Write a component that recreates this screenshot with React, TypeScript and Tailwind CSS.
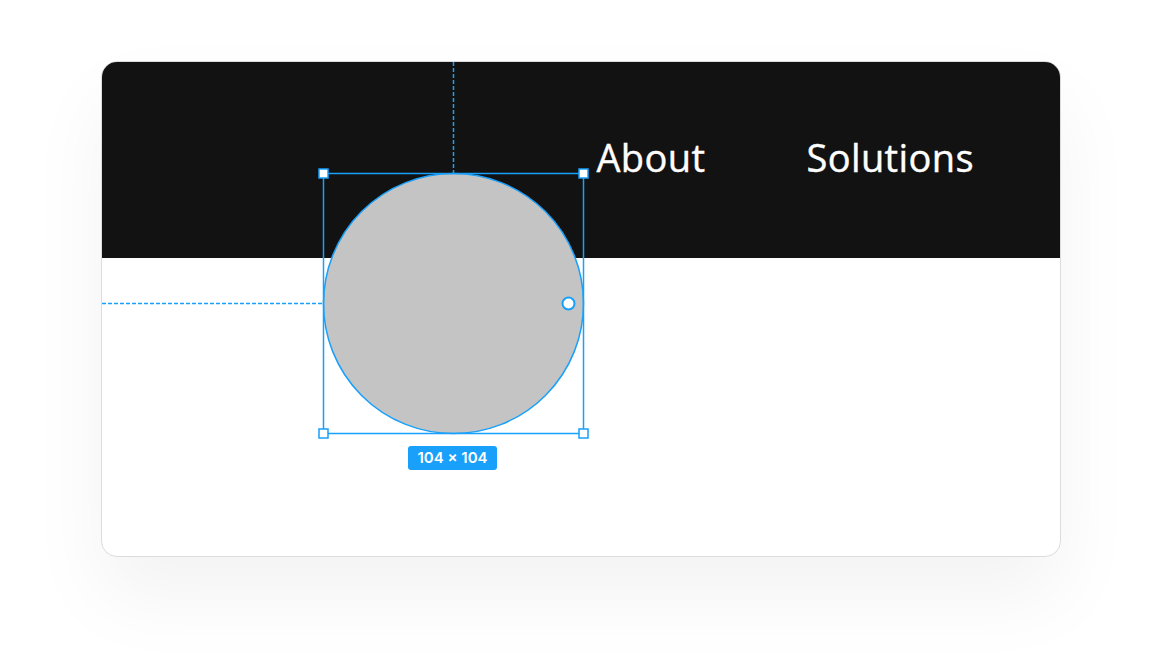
import React from "react";

export default function App() {
  const blue = "#18a0fb";
  return (
    <div className="w-[1162px] h-[658px] bg-white overflow-hidden">
      <div className="pt-[61px]">
        <div className="relative mx-auto w-[960px] h-[496px] rounded-[16px] border border-[#dcdcdc] bg-white shadow-[0_40px_80px_rgba(0,0,0,0.05)] overflow-hidden">
          <header className="h-[196px] bg-[#121212] flex justify-end items-start pt-[69px] pr-[86px] gap-[101px]">
            <span className="text-white text-[38px] leading-[52px] font-medium tracking-[0.4px]" style={{ fontFamily: "'Open Sans', sans-serif", WebkitTextStroke: "0.4px white" }}>About</span>
            <span className="text-white text-[38px] leading-[52px] font-medium tracking-[0.4px]" style={{ fontFamily: "'Open Sans', sans-serif", WebkitTextStroke: "0.4px white" }}>Solutions</span>
          </header>

          {/* selection overlay */}
          <svg className="absolute left-0 top-0" width="960" height="496" viewBox="0 0 960 496">
            {/* dashed guides */}
            <line x1="351.5" y1="0" x2="351.5" y2="111" stroke={blue} strokeWidth="1.5" strokeDasharray="4 2" />
            <line x1="0" y1="241.5" x2="220" y2="241.5" stroke={blue} strokeWidth="1.5" strokeDasharray="4 2" />
            {/* circle */}
            <circle cx="351.5" cy="241.5" r="130" fill="#c4c4c4" stroke={blue} strokeWidth="1.5" />
            {/* bounding box */}
            <rect x="221.5" y="111.5" width="260" height="260" fill="none" stroke={blue} strokeWidth="1.5" />
            {/* handles */}
            <rect x="217" y="107" width="9" height="9" fill="white" stroke={blue} strokeWidth="1.5" />
            <rect x="477" y="107" width="9" height="9" fill="white" stroke={blue} strokeWidth="1.5" />
            <rect x="217" y="367" width="9" height="9" fill="white" stroke={blue} strokeWidth="1.5" />
            <rect x="477" y="367" width="9" height="9" fill="white" stroke={blue} strokeWidth="1.5" />
            {/* radius handle */}
            <circle cx="466.5" cy="241.5" r="6" fill="white" stroke={blue} strokeWidth="2" />
          </svg>

          <div
            className="absolute left-[306px] top-[384px] w-[89px] h-[24px] rounded-[3px] bg-[#18a0fb] text-white text-[15px] font-semibold flex items-center justify-center"
            style={{ fontFamily: "Inter, sans-serif" }}
          >
            104 × 104
          </div>
        </div>
      </div>
    </div>
  );
}
